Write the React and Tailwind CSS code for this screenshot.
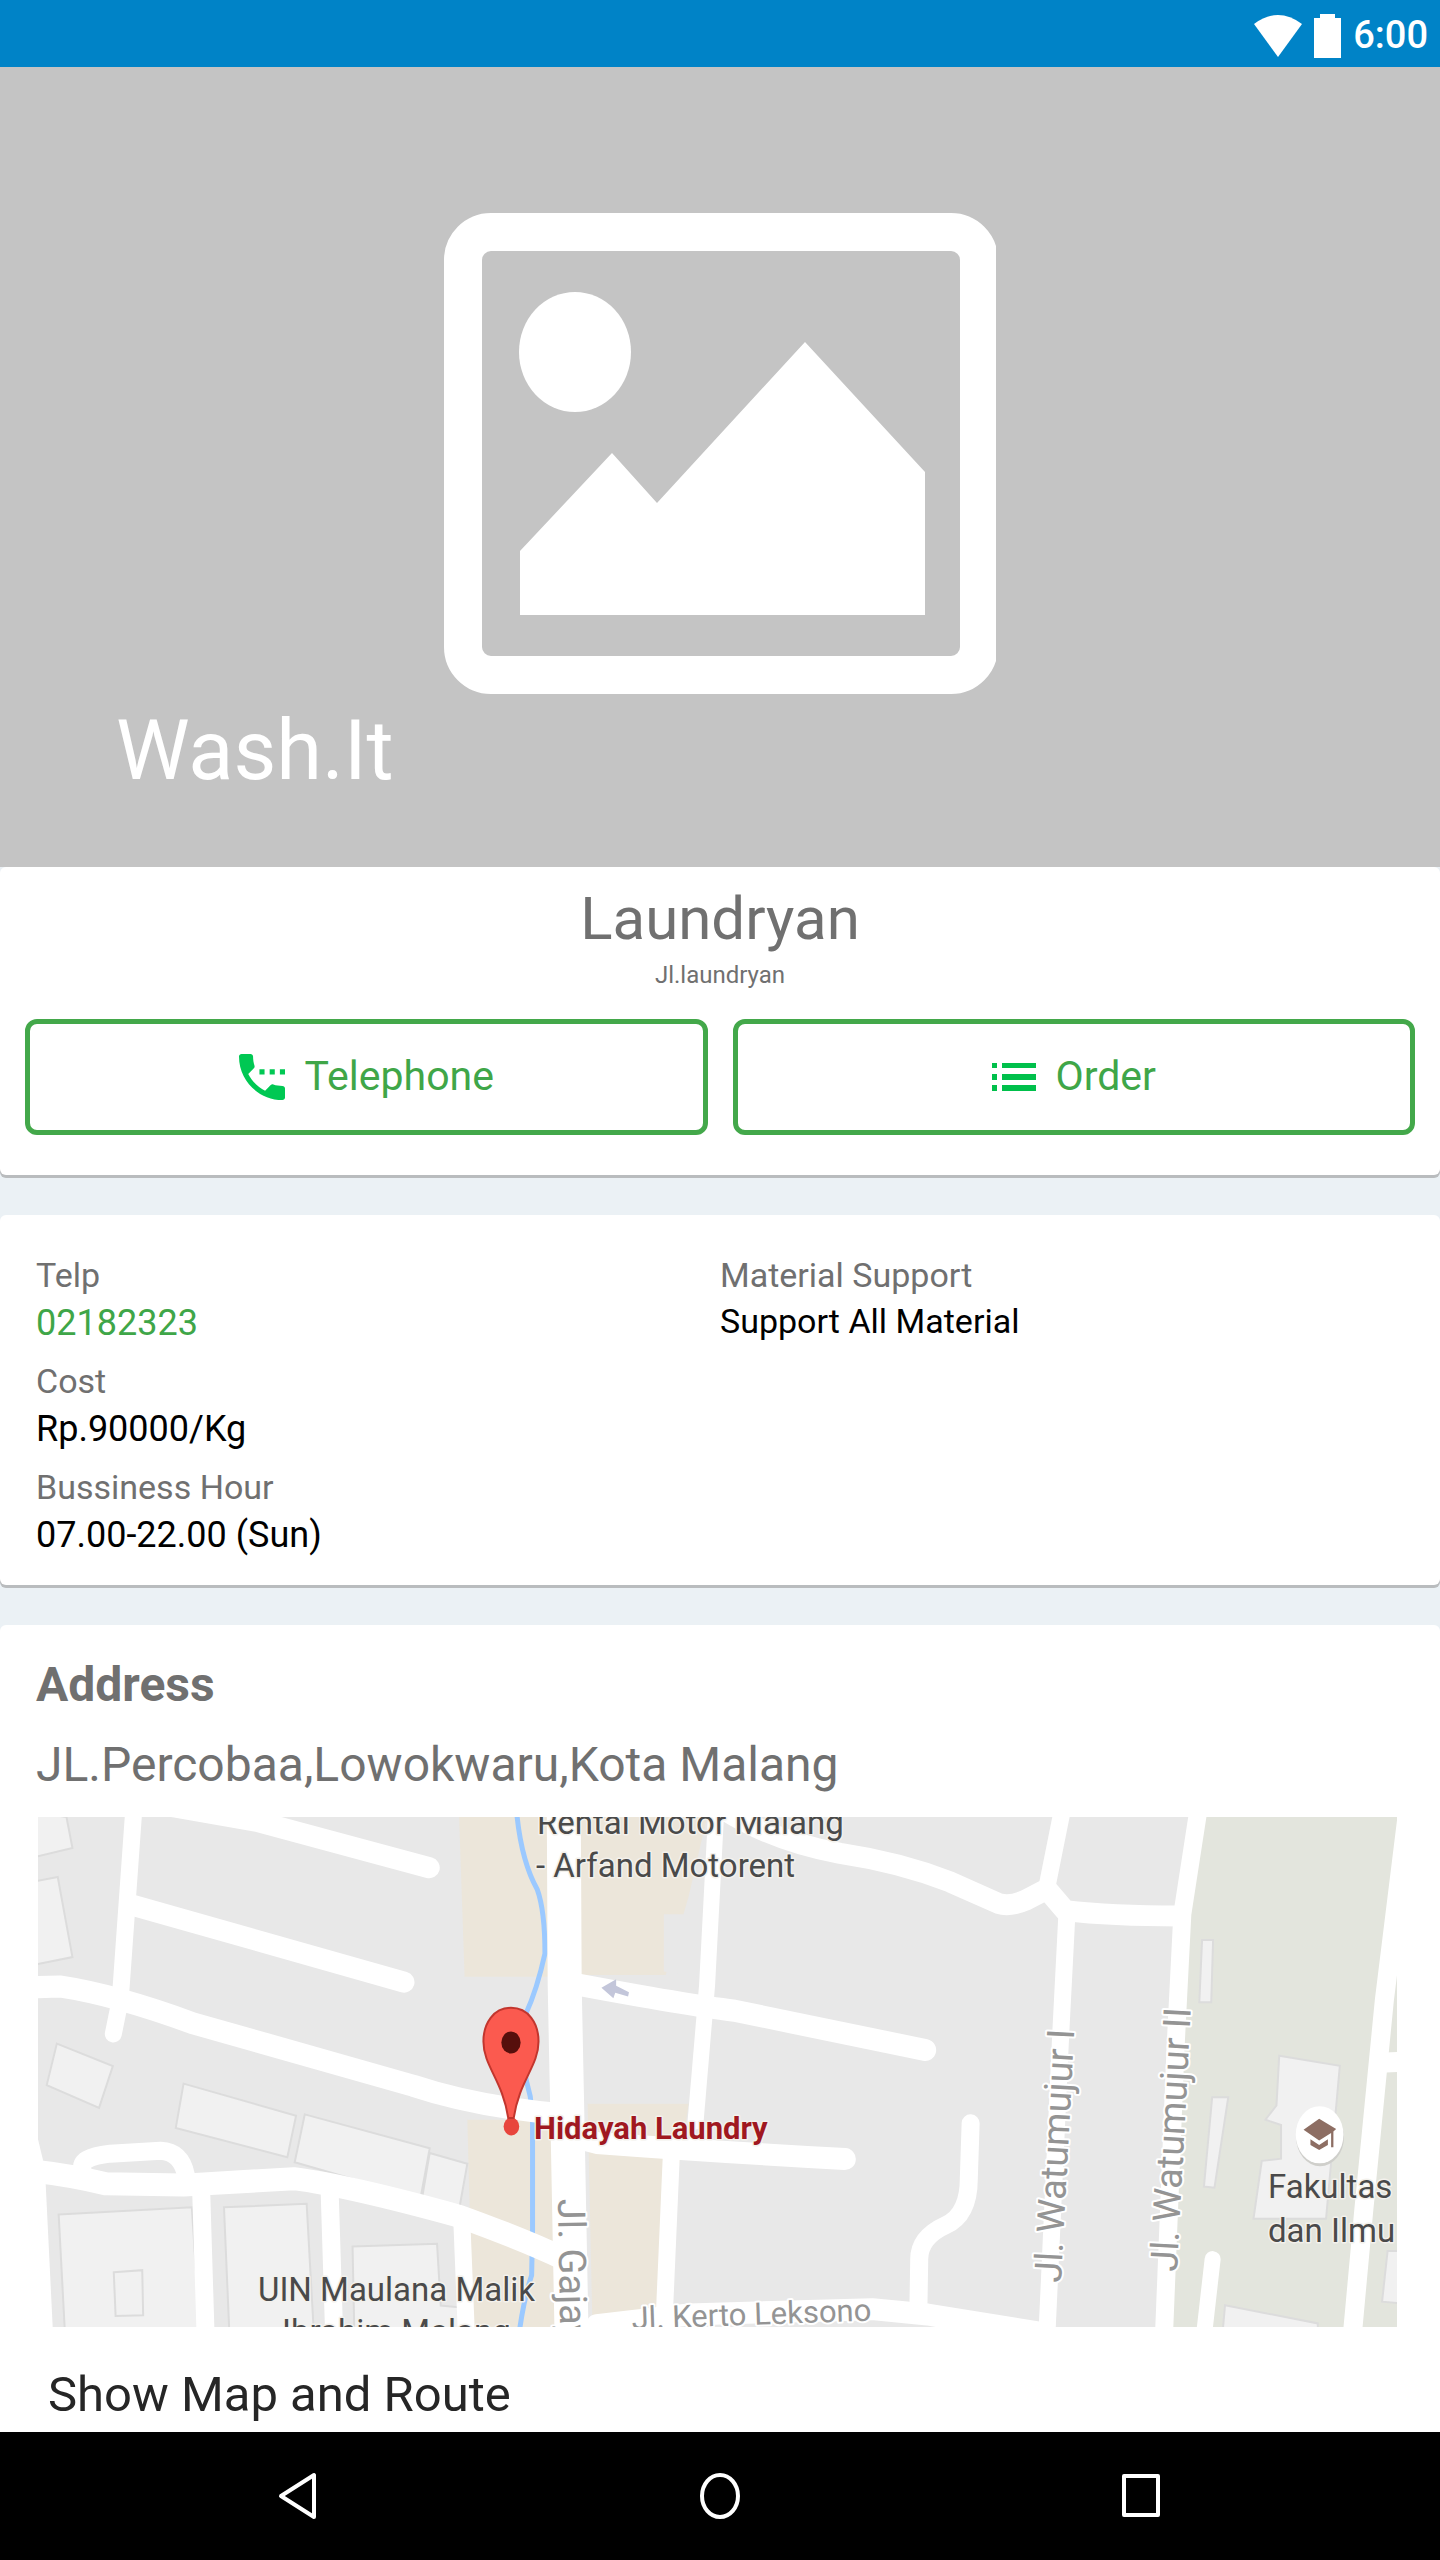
const road = { fill: "none", stroke: "#ffffff", strokeLinecap: "round", strokeLinejoin: "round", vectorEffect: "non-scaling-stroke" };
const building = { fill: "#f1f1f1", stroke: "#dcdcdc", strokeWidth: 2, vectorEffect: "non-scaling-stroke" };

const roads = [
  { d: "M292 20 L262 560 L247 655", w: 17 },
  { d: "M380 20 L560 60 L935 190", w: 21 },
  { d: "M290 295 L880 510", w: 21 },
  { d: "M60 525 L130 522 Q250 545 420 625 L900 800 Q1040 860 1230 880", w: 22 },
  { d: "M1228 30 L1230 520 L1236 900 L1245 1500", w: 34 },
  { d: "M1250 515 Q1500 575 1600 590 L2015 700", w: 22 },
  { d: "M1560 30 L1540 520 L1515 900", w: 16 },
  { d: "M1240 940 L1300 960 Q1560 985 1840 1005", w: 22 },
  { d: "M1462 1000 L1445 1500", w: 17 },
  { d: "M80 1040 Q150 1050 230 1074 L400 1078 L640 1060 Q760 1080 1000 1165 Q1140 1230 1230 1285", w: 23 },
  { d: "M180 1035 Q170 1000 240 990 L350 982 Q395 985 405 1050", w: 18 },
  { d: "M438 1080 L448 1500", w: 18 },
  { d: "M718 1090 L728 1500", w: 18 },
  { d: "M1006 1180 L1016 1500", w: 17 },
  { d: "M1568 20 Q1680 115 1830 150 Q1960 175 2070 230 L2175 290 Q2200 300 2235 280 L2280 250 L2320 310 Q2420 325 2570 325", w: 21 },
  { d: "M2315 20 L2280 245", w: 17 },
  { d: "M2324 310 L2310 660 L2280 1500", w: 17 },
  { d: "M2611 20 L2575 320 L2560 700 L2535 1500", w: 18 },
  { d: "M2114 905 L2110 1060 Q2110 1160 2060 1190 Q2000 1225 2002 1290 L2000 1440", w: 18 },
  { d: "M1300 1470 L1500 1440 L1900 1425 L2020 1440 L2260 1490", w: 22 },
  { d: "M2641 1285 L2622 1500", w: 16 },
  { d: "M3065 40 L3015 560 L2970 1150 L2945 1500", w: 19 },
  { d: "M3018 735 L3060 732", w: 20 },
];

const buildings = [
  "60 30 145 48 158 135 60 165",
  "60 232 126 216 158 440 60 465",
  "124 682 246 745 216 862 102 798",
  "400 794 645 884 626 1000 383 918",
  "664 880 936 975 916 1115 642 1014",
  "936 988 1018 1018 1001 1140 920 1110",
  "128 1160 418 1140 436 1500 142 1500",
  "248 1322 310 1316 312 1442 252 1444",
  "488 1140 668 1130 684 1500 500 1500",
  "768 1250 952 1242 960 1415 1000 1420 1004 1500 772 1500",
  "2618 392 2642 392 2638 566 2612 566",
  "2640 832 2675 832 2645 1085 2622 1082",
  "2786 716 2918 744 2888 1172 2730 1172 2748 1010 2790 1004 2790 910 2756 895 2780 855",
  "2668 1414 2870 1465 2870 1500 2662 1500",
  "3022 1262 3060 1262 3060 1410 3010 1404",
];

function WashMap() {
  return (
    <svg viewBox="0 0 1359 510" className="block h-auto w-full overflow-hidden" role="img" aria-label="Map of Hidayah Laundry">
      <g transform="scale(0.4592 0.3574) translate(-83 -48)">
        <rect x="83" y="48" width="2960" height="1427" fill="#e8e8e8" />
        <path d="M1000 48 H1210 V495 H1012 Z M1250 48 H1540 L1500 270 L1450 490 H1260 Z M1018 895 H1210 V1500 H1030 Z M1280 850 H1500 L1430 1430 L1290 1450 Z" fill="#ece6da" />
        <path d="M2610 48 H3060 V1500 H2545 L2570 660 Z" fill="#e3e5dd" />
        <path d="M1510 270 L1555 270 L1540 500 L1446 480 V320 H1500 Z" fill="#e8e8e8" />
        {buildings.map((points) => <polygon key={points} points={points} {...building} />)}
        <path d="M1125 30 Q1135 170 1170 250 Q1187 310 1187 430 Q1170 530 1145 600 Q1125 690 1155 830 L1160 900 L1160 1200 L1158 1330 Q1140 1400 1130 1500" fill="none" stroke="#9bc9ff" strokeWidth="5" vectorEffect="non-scaling-stroke" />
        {roads.map((r) => <path key={r.d} d={r.d} strokeWidth={r.w} {...road} />)}
        <path d="M83 950 L98 1030 L115 1475 H83 Z" fill="#ffffff" />
        <path d="M1310 526 L1342 502 L1342 520 L1370 538 L1368 550 L1340 540 L1336 555 Z" fill="#c3c6da" />
        <ellipse cx="1114" cy="914" rx="17" ry="25" fill="#e8453c" />
        <path d="M1113 582 C1075 582 1053 625 1053 676 C1053 745 1095 785 1107 890 H1119 C1131 785 1173 745 1173 676 C1173 625 1151 582 1113 582 Z" fill="#fb5a4f" stroke="#c2362e" strokeWidth="2" vectorEffect="non-scaling-stroke" />
        <ellipse cx="1113" cy="679" rx="21" ry="31" fill="#560f0c" />
        <ellipse cx="2875" cy="945" rx="52" ry="80" fill="#cfcfcb" />
        <ellipse cx="2874" cy="937" rx="52" ry="80" fill="#ffffff" />
        <path d="M2839 923 L2873 892 L2910 921 L2904 928 V972 H2899 V932 L2873 953 Z M2854 950 L2873 966 L2892 950 V966 L2873 980 L2854 966 Z" fill="#8d6e63" />
      </g>
      <g fontFamily="Roboto, sans-serif" fill="#4a4a4a" stroke="#f3f1ec" strokeWidth="3" strokeLinejoin="round" paintOrder="stroke" fontSize="33">
        <text x="499" y="17">Rental Motor Malang</text>
        <text x="498" y="60">- Arfand Motorent</text>
        <text x="220" y="484">UIN Maulana Malik</text>
        <text x="244" y="526">Ibrahim Malang</text>
        <text x="1230" y="381">Fakultas</text>
        <text x="1230" y="425">dan Ilmu</text>
        <text x="496" y="322" fill="#a01820" fontWeight="700" fontSize="31">Hidayah Laundry</text>
      </g>
      <g fontFamily="Roboto, sans-serif" fill="#949494" stroke="#ffffff" strokeWidth="4" strokeLinejoin="round" paintOrder="stroke" fontSize="38">
        <text transform="translate(1023 466) rotate(-87)">Jl. Watumujur I</text>
        <text transform="translate(1139 455) rotate(-87)">Jl. Watumujur II</text>
        <text transform="translate(520 382) rotate(89)">Jl. Gajayana</text>
        <text transform="translate(594 512) rotate(-2)" fontSize="31">Jl. Kerto Leksono</text>
      </g>
    </svg>
  );
}

function Detail({ label, children }) {
  return (
    <div className="mb-[10px]">
      <dt className="text-[34px] leading-[48px] text-[#707070]">{label}</dt>
      <dd className="text-[36px] leading-[48px] text-black">{children}</dd>
    </div>
  );
}

const card = "rounded-md bg-white shadow-[0_3px_0_#b9bcbe]";
const action = "flex h-[116px] flex-1 items-center justify-center gap-5 rounded-xl border-5 border-[#43a84a] text-[41px] text-[#3fa648]";

export default function App() {
  return (
    <div className="flex min-h-screen flex-col bg-[#ebf1f5] font-[Roboto,sans-serif]">
      <header className="flex h-[67px] items-center justify-end gap-3 bg-[#0083c7] pt-1 pr-3 text-white">
        <svg viewBox="0 0 48 42" className="h-[42px] w-12" aria-hidden="true">
          <path d="M0 9 Q24 -9 48 9 L24 42 Z" fill="currentColor" />
        </svg>
        <svg viewBox="0 0 27 44" className="h-11 w-[27px]" aria-hidden="true">
          <path d="M6 0 H21 V4 H27 V44 H0 V4 H6 Z" fill="currentColor" />
        </svg>
        <time className="text-[38px] font-medium">6:00</time>
      </header>

      <section className="relative flex h-[800px] justify-center bg-[#c4c4c4] pt-[145px]">
        <svg viewBox="0 0 552 482" className="h-[482px] w-[552px]" aria-hidden="true">
          <rect x="19" y="20" width="516" height="443" rx="28" fill="none" stroke="#ffffff" strokeWidth="38" />
          <ellipse cx="131" cy="140" rx="56" ry="60" fill="#ffffff" />
          <path d="M76 339 L168 241 L213 291 L361 130 L481 260 V403 H76 Z" fill="#ffffff" />
        </svg>
        <h1 className="absolute bottom-[62px] left-[116px] text-[83px] leading-[108px] text-white">Wash.It</h1>
      </section>

      <main className="flex flex-1 flex-col gap-10">
        <section className={`${card} px-[25px] pt-3 pb-10`}>
          <h2 className="text-center text-6xl leading-[80px] text-[#707070]">Laundryan</h2>
          <p className="text-center text-2xl text-[#707070]">Jl.laundryan</p>
          <div className="mt-7 flex gap-[25px]">
            <button type="button" className={action}>
              <svg viewBox="3 3 18 18" className="h-12 w-[46px]" fill="#00c853" aria-hidden="true">
                <path d="M11 9h2v2h-2zm4 0h2v2h-2zm5 6.500c-1.250 0-2.450-.2-3.570-.57-.1-.03-.21-.05-.31-.05-.26 0-.51.1-.71.290l-2.200 2.200c-2.830-1.440-5.150-3.750-6.590-6.590l2.200-2.200c.28-.28.360-.67.250-1.020C8.700 6.450 8.500 5.250 8.500 4c0-.55-.45-1-1-1H4c-.55 0-1 .45-1 1 0 9.390 7.610 17 17 17 .55 0 1-.45 1-1v-3.500c0-.55-.45-1-1-1zM19 9v2h2V9h-2z" />
              </svg>
              Telephone
            </button>
            <button type="button" className={action}>
              <svg viewBox="0 0 44 28" className="h-7 w-11" fill="#00c04b" aria-hidden="true">
                <path d="M0 0h5v5H0zM0 11h5v6H0zM0 22h5v6H0zM10 0h34v5H10zM10 11h34v6H10zM10 22h34v6H10z" />
              </svg>
              Order
            </button>
          </div>
        </section>

        <section className={`${card} grid grid-cols-2 pt-9 pb-4`}>
          <dl className="pl-9">
            <Detail label="Telp"><a href="tel:02182323" className="text-[#3fa648]">02182323</a></Detail>
            <Detail label="Cost">Rp.90000/Kg</Detail>
            <Detail label="Bussiness Hour">07.00-22.00 (Sun)</Detail>
          </dl>
          <dl>
            <dt className="text-[34px] leading-[48px] text-[#707070]">Material Support</dt>
            <dd className="text-[34px] leading-[44px] text-black">Support All Material</dd>
          </dl>
        </section>

        <section className="flex-1 rounded-t-md bg-white">
          <h2 className="px-9 pt-7 text-5xl leading-[64px] font-bold text-[#707070]">Address</h2>
          <p className="px-9 pt-4 text-5xl leading-[64px] text-[#707070]">JL.Percobaa,Lowokwaru,Kota Malang</p>
          <div className="mt-5 pr-[43px] pl-[38px]"><WashMap /></div>
          <a href="#route" className="mt-8 block px-12 text-[49px] leading-[72px] text-[#262626]">Show Map and Route</a>
        </section>
      </main>

      <nav className="flex h-32 items-center justify-around bg-black px-[88px] text-white" aria-label="System navigation">
        <button type="button" aria-label="Back">
          <svg viewBox="0 0 44 52" className="h-[52px] w-11" fill="none" stroke="currentColor" strokeWidth="4" strokeLinejoin="round"><path d="M37 5 V47 L4 26 Z" /></svg>
        </button>
        <button type="button" aria-label="Home">
          <svg viewBox="0 0 44 50" className="h-[50px] w-11" fill="none" stroke="currentColor" strokeWidth="4"><ellipse cx="22" cy="25" rx="18" ry="21" /></svg>
        </button>
        <button type="button" aria-label="Recent apps">
          <svg viewBox="0 0 44 50" className="h-[50px] w-11" fill="none" stroke="currentColor" strokeWidth="4" strokeLinejoin="round"><rect x="5" y="5" width="34" height="39" /></svg>
        </button>
      </nav>
    </div>
  );
}
